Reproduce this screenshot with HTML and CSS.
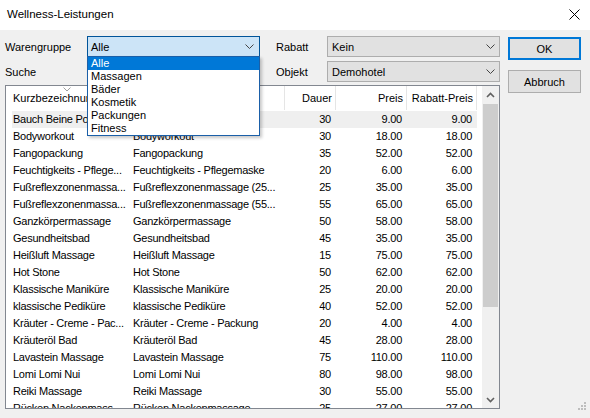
FILE: index.html
```html
<!DOCTYPE html>
<html lang="de">
<head>
    <meta charset="UTF-8">
    <meta name="viewport" content="width=device-width, initial-scale=1.0">
    <title>Wellness-Leistungen</title>
    <link rel="stylesheet" href="styles.css">
</head>
<body>
    <div class="window">
        <!-- Title bar -->
        <header class="titlebar">
            <span class="title">Wellness-Leistungen</span>
            <svg class="close" width="11" height="11" viewBox="0 0 11 11">
                <path d="M0.5 0.5 L10.5 10.5 M10.5 0.5 L0.5 10.5" stroke="#000" stroke-width="1" fill="none"/>
            </svg>
        </header>

        <div class="dialog">
            <div class="main">
                <!-- Filters -->
                <div class="filters">
                    <label class="lbl">Warengruppe</label>
                    <div class="combo-wrap">
                        <div class="combo focused">
                            <span>Alle</span>
                            <svg class="chev" width="9" height="5" viewBox="0 0 9 5"><path d="M0.5 0.5 L4.5 4.5 L8.5 0.5" stroke="#444" fill="none"/></svg>
                        </div>
                        <ul class="dropdown">
                            <li class="selected">Alle</li>
                            <li>Massagen</li>
                            <li>Bäder</li>
                            <li>Kosmetik</li>
                            <li>Packungen</li>
                            <li>Fitness</li>
                        </ul>
                    </div>
                    <label class="lbl gap">Rabatt</label>
                    <div class="combo">
                        <span>Kein</span>
                        <svg class="chev" width="9" height="5" viewBox="0 0 9 5"><path d="M0.5 0.5 L4.5 4.5 L8.5 0.5" stroke="#444" fill="none"/></svg>
                    </div>
                    <label class="lbl">Suche</label>
                    <div class="textbox"></div>
                    <label class="lbl gap">Objekt</label>
                    <div class="combo">
                        <span>Demohotel</span>
                        <svg class="chev" width="9" height="5" viewBox="0 0 9 5"><path d="M0.5 0.5 L4.5 4.5 L8.5 0.5" stroke="#444" fill="none"/></svg>
                    </div>
                </div>

                <!-- List view -->
                <div class="listview">
                    <div class="lv-body">
                        <div class="lv-header">
                            <div class="hcell c1">
                                Kurzbezeichnung
                                <svg class="sort" width="8" height="5" viewBox="0 0 8 5"><path d="M0.5 0.5 L4 4 L7.5 0.5" stroke="#a0a0a0" fill="none"/></svg>
                            </div>
                            <div class="hcell c2">Bezeichnung</div>
                            <div class="hcell num c3">Dauer</div>
                            <div class="hcell num c4">Preis</div>
                            <div class="hcell num c5">Rabatt-Preis</div>
                        </div>
                        <div class="lv-rows">
                            <div class="row hot"><span>Bauch Beine Po</span><span>Bauch Beine Po</span><span class="num">30</span><span class="num">9.00</span><span class="num">9.00</span></div>
                            <div class="row"><span>Bodyworkout</span><span>Bodyworkout</span><span class="num">30</span><span class="num">18.00</span><span class="num">18.00</span></div>
                            <div class="row"><span>Fangopackung</span><span>Fangopackung</span><span class="num">35</span><span class="num">52.00</span><span class="num">52.00</span></div>
                            <div class="row"><span>Feuchtigkeits - Pflege...</span><span>Feuchtigkeits - Pflegemaske</span><span class="num">20</span><span class="num">6.00</span><span class="num">6.00</span></div>
                            <div class="row"><span>Fußreflexzonenmassa...</span><span>Fußreflexzonenmassage (25...</span><span class="num">25</span><span class="num">35.00</span><span class="num">35.00</span></div>
                            <div class="row"><span>Fußreflexzonenmassa...</span><span>Fußreflexzonenmassage (55...</span><span class="num">55</span><span class="num">65.00</span><span class="num">65.00</span></div>
                            <div class="row"><span>Ganzkörpermassage</span><span>Ganzkörpermassage</span><span class="num">50</span><span class="num">58.00</span><span class="num">58.00</span></div>
                            <div class="row"><span>Gesundheitsbad</span><span>Gesundheitsbad</span><span class="num">45</span><span class="num">35.00</span><span class="num">35.00</span></div>
                            <div class="row"><span>Heißluft Massage</span><span>Heißluft Massage</span><span class="num">15</span><span class="num">75.00</span><span class="num">75.00</span></div>
                            <div class="row"><span>Hot Stone</span><span>Hot Stone</span><span class="num">50</span><span class="num">62.00</span><span class="num">62.00</span></div>
                            <div class="row"><span>Klassische Maniküre</span><span>Klassische Maniküre</span><span class="num">25</span><span class="num">20.00</span><span class="num">20.00</span></div>
                            <div class="row"><span>klassische Pediküre</span><span>klassische Pediküre</span><span class="num">40</span><span class="num">52.00</span><span class="num">52.00</span></div>
                            <div class="row"><span>Kräuter - Creme - Pac...</span><span>Kräuter - Creme - Packung</span><span class="num">20</span><span class="num">4.00</span><span class="num">4.00</span></div>
                            <div class="row"><span>Kräuteröl Bad</span><span>Kräuteröl Bad</span><span class="num">45</span><span class="num">28.00</span><span class="num">28.00</span></div>
                            <div class="row"><span>Lavastein Massage</span><span>Lavastein Massage</span><span class="num">75</span><span class="num">110.00</span><span class="num">110.00</span></div>
                            <div class="row"><span>Lomi Lomi Nui</span><span>Lomi Lomi Nui</span><span class="num">80</span><span class="num">98.00</span><span class="num">98.00</span></div>
                            <div class="row"><span>Reiki Massage</span><span>Reiki Massage</span><span class="num">30</span><span class="num">55.00</span><span class="num">55.00</span></div>
                            <div class="row"><span>Rücken Nackenmass...</span><span>Rücken Nackenmassage</span><span class="num">25</span><span class="num">27.00</span><span class="num">27.00</span></div>
                        </div>
                    </div>

                    <!-- Vertical scrollbar -->
                    <div class="scrollbar">
                        <div class="sb-btn">
                            <svg width="9" height="6" viewBox="0 0 9 6"><path d="M1 5 L4.5 1.5 L8 5" stroke="#606060" stroke-width="1.6" fill="none"/></svg>
                        </div>
                        <div class="sb-thumb"></div>
                        <div class="sb-track"></div>
                        <div class="sb-btn">
                            <svg width="9" height="6" viewBox="0 0 9 6"><path d="M1 1 L4.5 4.5 L8 1" stroke="#606060" stroke-width="1.6" fill="none"/></svg>
                        </div>
                    </div>
                </div>
            </div>

            <!-- Buttons -->
            <div class="buttons">
                <button class="btn default">OK</button>
                <button class="btn">Abbruch</button>
            </div>

            <svg class="grip" width="8" height="8" viewBox="0 0 8 8">
                <rect x="6" y="0" width="2" height="2" fill="#bdbdbd"/>
                <rect x="3" y="3" width="2" height="2" fill="#bdbdbd"/>
                <rect x="6" y="3" width="2" height="2" fill="#bdbdbd"/>
                <rect x="0" y="6" width="2" height="2" fill="#bdbdbd"/>
                <rect x="3" y="6" width="2" height="2" fill="#bdbdbd"/>
                <rect x="6" y="6" width="2" height="2" fill="#bdbdbd"/>
            </svg>
        </div>
    </div>
</body>
</html>
```

FILE: styles.css
```css
/* Reset and base styles */
* {
    box-sizing: border-box;
    margin: 0;
    padding: 0;
}

body {
    font-family: "Liberation Sans", Arial, sans-serif;
    font-size: 11px;
    color: #000;
    background: #f0f0f0;
    width: 590px;
    height: 418px;
    overflow: hidden;
}

.window {
    width: 590px;
    height: 418px;
    display: flex;
    flex-direction: column;
}

/* Title bar */
.titlebar {
    height: 30px;
    background: #fff;
    display: flex;
    align-items: center;
    justify-content: space-between;
    padding: 0 10px 2px 7px;
}

.title {
    font-size: 11.5px;
}

.close {
    margin-top: 1px;
}

/* Dialog body */
.dialog {
    position: relative;
    flex: 1;
    display: flex;
    padding: 6px 0 0 5px;
}

.main {
    width: 495px;
    display: flex;
    flex-direction: column;
}

.filters {
    display: grid;
    grid-template-columns: 82px 173px 67px 173px;
    grid-template-rows: 21px 21px;
    row-gap: 4px;
}

.lbl {
    display: flex;
    align-items: center;
}

.lbl.gap {
    margin-left: 16px;
}

.combo-wrap {
    position: relative;
}

.combo {
    height: 21px;
    display: flex;
    align-items: center;
    justify-content: space-between;
    padding: 0 4px;
    background: #e1e1e1;
    border: 1px solid #adadad;
}

.combo.focused {
    background: #cce4f7;
    border-color: #005499;
    padding-left: 3px;
    padding-right: 5px;
}

.textbox {
    height: 21px;
    background: #fff;
    border: 1px solid #7a7a7a;
}

/* Open drop-down list */
.dropdown {
    position: absolute;
    top: 20px;
    left: 0;
    width: 173px;
    list-style: none;
    background: #fff;
    border: 1px solid #1a5fa8;
    box-shadow: 2px 2px 3px rgba(0, 0, 0, 0.22);
    z-index: 5;
}

.dropdown li {
    height: 13px;
    line-height: 13px;
    padding-left: 3px;
}

.dropdown li.selected {
    background: #0078d7;
    color: #fff;
}

/* List view */
.listview {
    margin-top: 3px;
    height: 324px;
    display: flex;
    background: #fff;
    border: 1px solid #828790;
}

.lv-body {
    flex: 1;
    overflow: hidden;
}

.lv-header {
    height: 25px;
    display: flex;
    padding-bottom: 1px;
}

.hcell {
    position: relative;
    display: flex;
    align-items: center;
    border-right: 1px solid #e5e5e5;
    white-space: nowrap;
    overflow: hidden;
}

.hcell.c1 { width: 122px; padding-left: 7px; }
.hcell.c2 { width: 157px; padding-left: 5px; }
.hcell.c3 { width: 51px; }
.hcell.c4 { width: 71px; }
.hcell.c5 { width: 70px; }

.hcell.num {
    justify-content: flex-end;
    padding-right: 3px;
}

.sort {
    position: absolute;
    top: 1px;
    left: 57px;
}

.lv-rows {
    padding-left: 6px;
}

.row {
    display: grid;
    grid-template-columns: 116px 157px 51px 71px 70px;
    height: 17px;
    line-height: 17px;
    width: 465px;
    white-space: nowrap;
    letter-spacing: -0.25px;
}

.row span {
    overflow: hidden;
}

.row span:first-child {
    padding-left: 1px;
}

.row span:nth-child(2) {
    padding-left: 5px;
}

.row .num {
    text-align: right;
    padding-right: 5px;
}

.row.hot {
    background: #efefef;
}

/* Scrollbar */
.scrollbar {
    width: 17px;
    background: #f0f0f0;
    display: flex;
    flex-direction: column;
}

.sb-btn {
    height: 17px;
    display: flex;
    align-items: center;
    justify-content: center;
}

.sb-thumb {
    height: 203px;
    margin: 1px 1px 0 1px;
    background: #cdcdcd;
}

.sb-track {
    flex: 1;
}

/* Buttons */
.buttons {
    margin-left: 8px;
    padding-top: 1px;
    display: flex;
    flex-direction: column;
    gap: 10px;
}

.btn {
    width: 73px;
    height: 23px;
    font-family: "Liberation Sans", Arial, sans-serif;
    font-size: 11px;
    color: #000;
    background: #e1e1e1;
    border: 1px solid #adadad;
}

.btn.default {
    border: 2px solid #0078d7;
}

.grip {
    position: absolute;
    right: 4px;
    bottom: 8px;
}
```
